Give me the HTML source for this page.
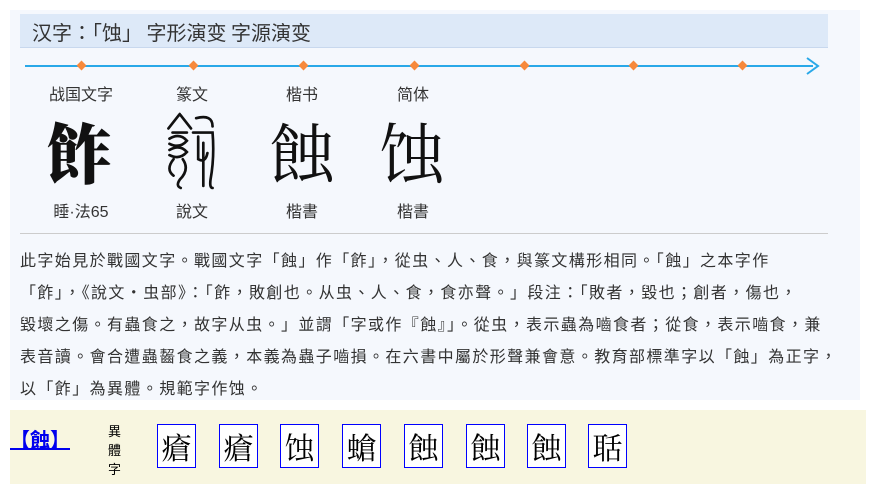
<!DOCTYPE html>
<html><head><meta charset="utf-8"><style>
body{margin:0;width:876px;height:494px;background:#fff;font-family:"Liberation Sans","Noto Sans CJK TC",sans-serif;position:relative;overflow:hidden}
.panel{position:absolute;left:10px;top:10px;width:850px;height:390px;background:#f5f8fd}
.hdr{position:absolute;left:20px;top:14px;width:808px;height:34px;background:#dde9f8;border-bottom:1px solid #c8d8ee;font-size:20px;color:#333;line-height:36px;padding-left:12px;box-sizing:border-box;font-family:"Noto Sans CJK TC",sans-serif}
.line{position:absolute;left:25px;top:65px;width:788px;height:2px;background:#29a8e8}
.dot{position:absolute;top:62px;width:7px;height:7px;background:#f7893b;transform:rotate(45deg)}
.lab{position:absolute;font-size:16px;color:#333;text-align:center;width:100px}
.big{position:absolute;font-size:66px;text-align:center;width:100px;top:110px;color:#111;line-height:80px;font-family:"Noto Serif CJK SC",serif}
.sep{position:absolute;left:20px;top:233px;width:808px;height:1px;background:#ccc}
.txt{position:absolute;left:20px;top:243px;width:850px;font-size:16px;line-height:32px;color:#333;font-family:"Noto Sans CJK TC",sans-serif;white-space:nowrap;letter-spacing:1.4px}
.band{position:absolute;left:10px;top:410px;width:856px;height:74px;background:#f8f6e0}
.lnk{position:absolute;left:10px;top:424px;font-size:20px;font-weight:bold;color:#00e;text-decoration:underline;font-family:"Noto Sans CJK TC",sans-serif}
.vt{position:absolute;left:108px;top:422px;width:14px;font-size:13px;line-height:19px;color:#000}
.bx{position:absolute;top:424px;width:37px;height:42px;border:1px solid #00f;font-size:30px;line-height:42px;text-align:center;background:#fff;font-family:"Noto Serif CJK TC",serif}
</style></head><body>
<div class="panel"></div>
<div class="hdr">汉字：「蚀」 字形演变 字源演变</div>
<div class="line"></div>
<svg style="position:absolute;left:805px;top:56px" width="16" height="20"><path d="M2 2 L13 10 L2 18" stroke="#29a8e8" stroke-width="2" fill="none"/></svg>
<div class="dot" style="left:78px"></div><div class="dot" style="left:190px"></div><div class="dot" style="left:300px"></div><div class="dot" style="left:411px"></div><div class="dot" style="left:521px"></div><div class="dot" style="left:630px"></div><div class="dot" style="left:739px"></div>
<div class="lab" style="left:31px;top:81px">战国文字</div>
<div class="lab" style="left:142px;top:81px">篆文</div>
<div class="lab" style="left:252px;top:81px">楷书</div>
<div class="lab" style="left:363px;top:81px">简体</div>
<div class="big" style="left:29px;font-weight:900">飵</div>
<svg style="position:absolute;left:165px;top:112px" width="52" height="78" viewBox="0 0 50 76" fill="none" stroke="#111" stroke-width="2.6" stroke-linecap="round">
<path d="M14 2 L3 16 M14 2 L25 16 M7 20 H21 M4 26 Q14 20 21 28 Q14 36 4 31 M4 37 Q14 31 21 39 Q14 47 4 42 M8 46 Q0 56 8 62 M17 46 Q24 56 14 66 Q10 72 15 74"/>
<path d="M30 6 Q46 2 46 14 M27 20 H46 Q48 44 44 66 Q43 74 46 74 M32 24 V46 Q39 50 41 40 M37 30 V72"/>
</svg>
<div class="big" style="left:252px">蝕</div>
<div class="big" style="left:362px">蚀</div>
<div class="lab" style="left:31px;top:198px">睡·法65</div>
<div class="lab" style="left:142px;top:198px">說文</div>
<div class="lab" style="left:252px;top:198px">楷書</div>
<div class="lab" style="left:363px;top:198px">楷書</div>
<div class="sep"></div>
<div class="txt">此字始見於戰國文字。戰國文字「蝕」作「飵」，從虫、人、食，與篆文構形相同。「蝕」之本字作<br>「飵」，《說文·虫部》：「飵，敗創也。从虫、人、食，食亦聲。」段注：「敗者，毀也；創者，傷也，<br>毀壞之傷。有蟲食之，故字从虫。」並謂「字或作『蝕』」。從虫，表示蟲為嚙食者；從食，表示嚙食，兼<br>表音讀。會合遭蟲齧食之義，本義為蟲子嚙損。在六書中屬於形聲兼會意。教育部標準字以「蝕」為正字，<br>以「飵」為異體。規範字作蚀。</div>
<div class="band"></div>
<div class="lnk">【蝕】</div>
<div class="vt">異體字</div>
<div class="bx" style="left:157px">瘡</div>
<div class="bx" style="left:219px">瘡</div>
<div class="bx" style="left:280px">蚀</div>
<div class="bx" style="left:342px">螥</div>
<div class="bx" style="left:404px">蝕</div>
<div class="bx" style="left:466px">蝕</div>
<div class="bx" style="left:527px">蝕</div>
<div class="bx" style="left:588px">聒</div>
</body></html>
